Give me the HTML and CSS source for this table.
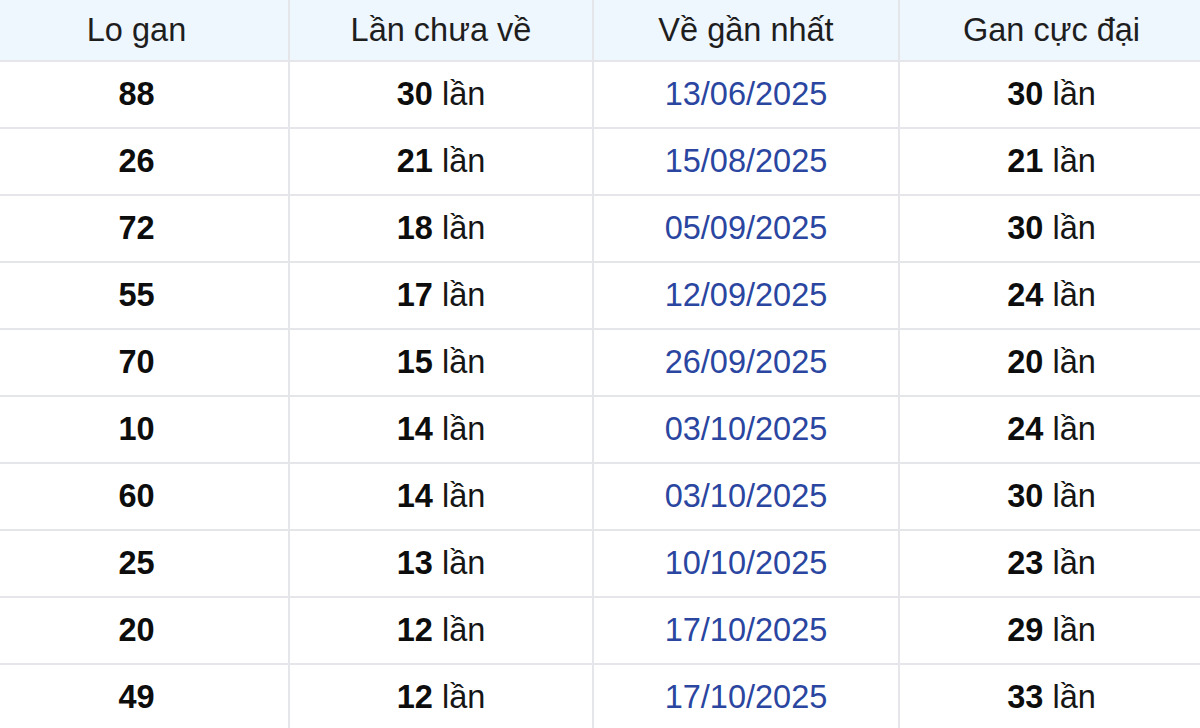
FILE: index.html
```html
<!DOCTYPE html>
<html lang="vi">
<head>
<meta charset="utf-8">
<title>Lo gan</title>
<link rel="stylesheet" href="styles.css">
</head>
<body>
<table class="gan">
  <colgroup>
    <col class="c1"><col class="c2"><col class="c3"><col class="c4">
  </colgroup>
  <thead>
    <tr><th>Lo gan</th><th>Lần chưa về</th><th>Về gần nhất</th><th>Gan cực đại</th></tr>
  </thead>
  <tbody>
    <tr><td class="num">88</td><td><b>30</b> lần</td><td class="date">13/06/2025</td><td><b>30</b> lần</td></tr>
    <tr><td class="num">26</td><td><b>21</b> lần</td><td class="date">15/08/2025</td><td><b>21</b> lần</td></tr>
    <tr><td class="num">72</td><td><b>18</b> lần</td><td class="date">05/09/2025</td><td><b>30</b> lần</td></tr>
    <tr><td class="num">55</td><td><b>17</b> lần</td><td class="date">12/09/2025</td><td><b>24</b> lần</td></tr>
    <tr><td class="num">70</td><td><b>15</b> lần</td><td class="date">26/09/2025</td><td><b>20</b> lần</td></tr>
    <tr><td class="num">10</td><td><b>14</b> lần</td><td class="date">03/10/2025</td><td><b>24</b> lần</td></tr>
    <tr><td class="num">60</td><td><b>14</b> lần</td><td class="date">03/10/2025</td><td><b>30</b> lần</td></tr>
    <tr><td class="num">25</td><td><b>13</b> lần</td><td class="date">10/10/2025</td><td><b>23</b> lần</td></tr>
    <tr><td class="num">20</td><td><b>12</b> lần</td><td class="date">17/10/2025</td><td><b>29</b> lần</td></tr>
    <tr><td class="num">49</td><td><b>12</b> lần</td><td class="date">17/10/2025</td><td><b>33</b> lần</td></tr>
  </tbody>
</table>
</body>
</html>
```
FILE: styles.css
```css
html, body {
  margin: 0;
  padding: 0;
  background: #ffffff;
  overflow: hidden;
  height: 728px;
}
.gan {
  width: 1218px;
  margin-left: -15px;
  border-collapse: collapse;
  table-layout: fixed;
  font-family: "Liberation Sans", Arial, sans-serif;
  font-size: 32.5px;
  color: #161616;
}
.c1 { width: 304px; }
.c2 { width: 304px; }
.c3 { width: 306px; }
.c4 { width: 304px; }
.gan th, .gan td {
  text-align: center;
  padding: 0;
  border: 2px solid #e4e6e9;
}
.gan tr > :first-child { border-left: none; }
.gan tr > :last-child { border-right: none; }
.gan thead tr > th { border-top: none; }
.gan th {
  height: 60px;
  background: #eef6fe;
  font-weight: normal;
  color: #1e1e1e;
}
.gan td { height: 65px; }
.gan b { font-weight: bold; color: #0d0d0d; }
.gan .num { font-weight: bold; color: #0d0d0d; }
.gan .date { color: #2a46a0; }
```
